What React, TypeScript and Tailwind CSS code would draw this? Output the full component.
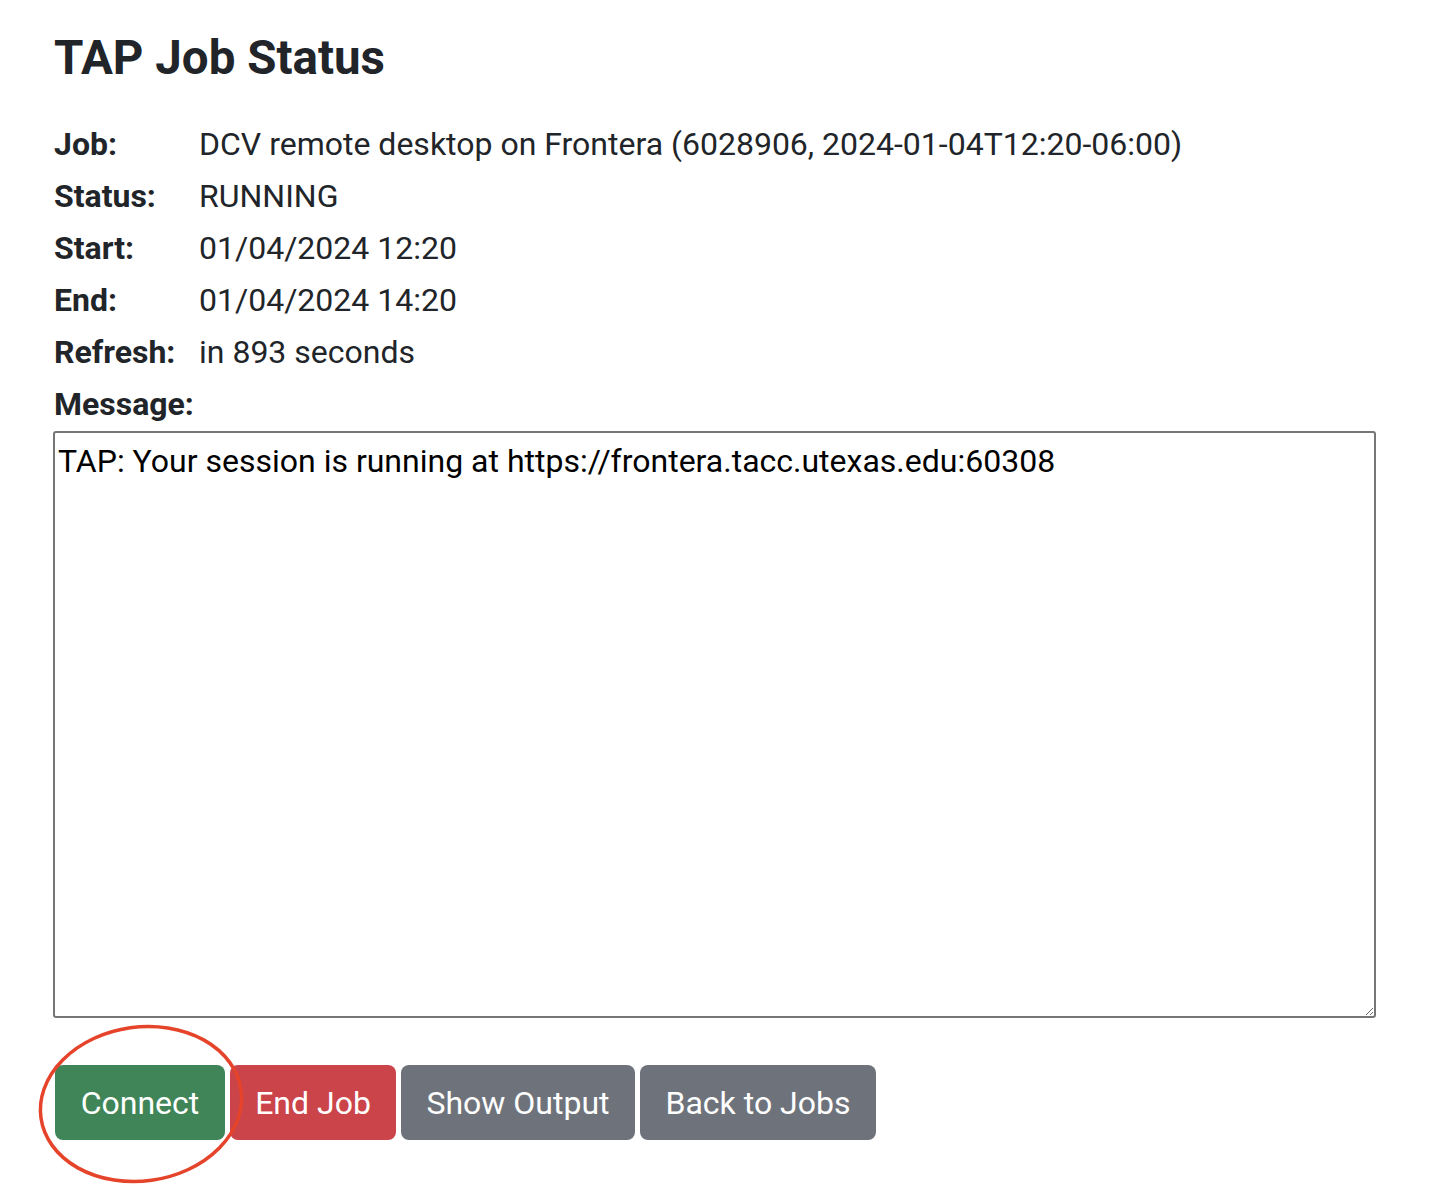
import React from "react";

const rows: [string, string][] = [
  ["Job:", "DCV remote desktop on Frontera (6028906, 2024-01-04T12:20-06:00)"],
  ["Status:", "RUNNING"],
  ["Start:", "01/04/2024 12:20"],
  ["End:", "01/04/2024 14:20"],
  ["Refresh:", "in 893 seconds"],
];

export default function App() {
  return (
    <div
      className="relative w-[1454px] h-[1188px] bg-white text-[#212529] overflow-hidden"
      style={{ fontFamily: "Roboto, 'Liberation Sans', sans-serif" }}
    >
      <div className="pl-[53px] pt-[30px] w-[1376px]">
        <h1 className="text-[47.5px] font-bold leading-[1.2] ml-[1px] mb-[31px]">TAP Job Status</h1>
        <div className="grid grid-cols-[145px_1fr] text-[32px] leading-[52px] ml-[1px]">
          {rows.map(([k, v]) => (
            <React.Fragment key={k}>
              <div className="font-bold">{k}</div>
              <div>{v}</div>
            </React.Fragment>
          ))}
          <div className="font-bold col-span-2">Message:</div>
        </div>
        <textarea
          readOnly
          defaultValue="TAP: Your session is running at https://frontera.tacc.utexas.edu:60308"
          className="block w-[1323px] h-[587px] mt-[1px] border-2 border-[#767676] rounded-[3px] px-[3px] pt-[9px] text-[32px] leading-[1.2] text-black outline-none"
          style={{ fontFamily: "Roboto, 'Liberation Sans', sans-serif", resize: "both" }}
        />
        <div className="flex gap-[5px] mt-[47px] ml-[2px]">
          <button className="h-[75px] w-[170px] rounded-[8px] bg-[#3f8558] text-white text-[32px] leading-[48px]">
            Connect
          </button>
          <button className="h-[75px] w-[166px] rounded-[8px] bg-[#cb444a] text-white text-[32px] leading-[48px]">
            End Job
          </button>
          <button className="h-[75px] w-[234px] rounded-[8px] bg-[#6e737b] text-white text-[32px] leading-[48px]">
            Show Output
          </button>
          <button className="h-[75px] w-[236px] rounded-[8px] bg-[#6e737b] text-white text-[32px] leading-[48px]">
            Back to Jobs
          </button>
        </div>
      </div>
      <svg className="absolute left-0 top-0 pointer-events-none" width="1454" height="1188">
        <ellipse
          cx="141"
          cy="1104"
          rx="101"
          ry="77"
          fill="none"
          stroke="#e5432a"
          strokeWidth="3.5"
          transform="rotate(-8 141 1104)"
        />
      </svg>
    </div>
  );
}
